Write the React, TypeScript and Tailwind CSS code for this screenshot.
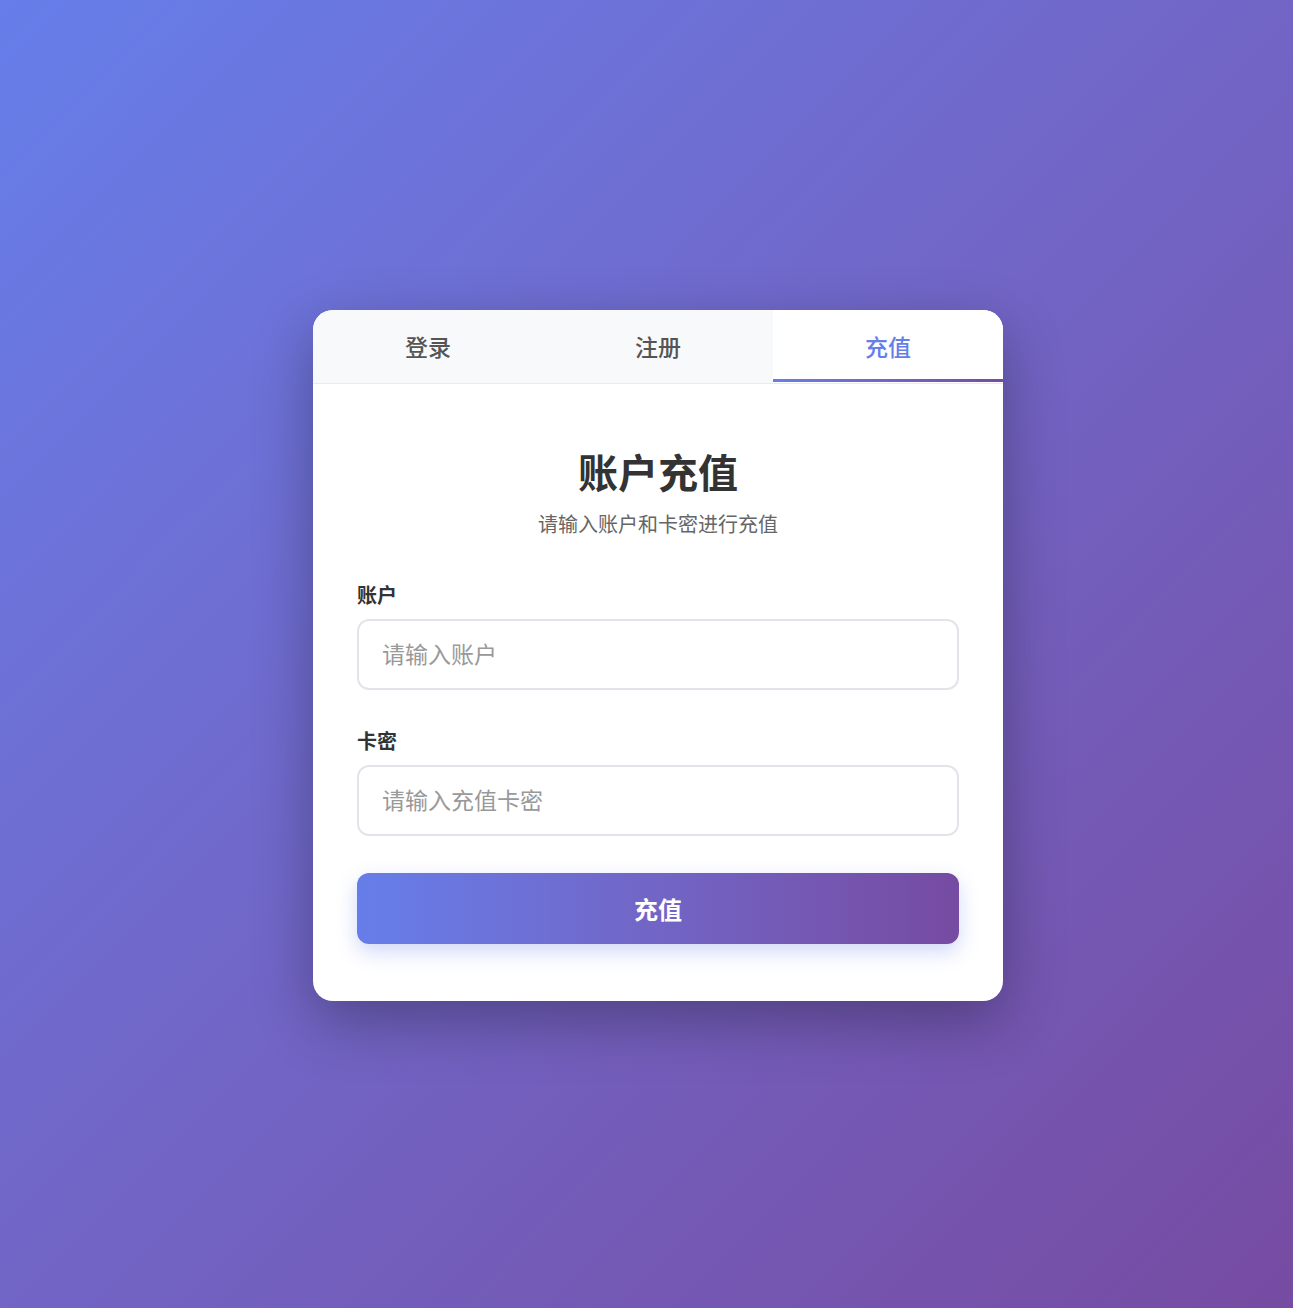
import { useState } from 'react';

type Tab = 'login' | 'register' | 'recharge';

const tabs: { key: Tab; label: string }[] = [
  { key: 'login', label: '登录' },
  { key: 'register', label: '注册' },
  { key: 'recharge', label: '充值' },
];

export default function App() {
  const [active, setActive] = useState<Tab>('recharge');
  const [account, setAccount] = useState('');
  const [card, setCard] = useState('');

  return (
    <div
      className="min-h-screen w-full flex items-center justify-center pl-[23px] pt-[3px] bg-gradient-to-br from-[#667eea] to-[#764ba2]"
      style={{ fontFamily: '"Noto Sans CJK SC", "Noto Sans", sans-serif' }}
    >
      <div className="w-[690px] bg-white rounded-[20px] overflow-hidden shadow-[0_20px_60px_rgba(0,0,0,0.3)]">
        {/* Tabs */}
        <div className="flex bg-[#f8f9fa] border-b border-[#e9ecef]">
          {tabs.map((t) => {
            const isActive = t.key === active;
            return (
              <button
                key={t.key}
                onClick={() => setActive(t.key)}
                className={`relative flex-1 h-[73px] text-[23px] font-medium ${
                  isActive ? 'bg-white text-[#667eea]' : 'text-[#555]'
                }`}
              >
                {t.label}
                {isActive && (
                  <span className="absolute left-0 right-0 bottom-[1px] h-[3px] bg-gradient-to-r from-[#667eea] to-[#764ba2]" />
                )}
              </button>
            );
          })}
        </div>

        {/* Recharge form */}
        <div className="px-[44px] pt-[66px] pb-[57px]">
          <div className="text-center">
            <h1 className="text-[40px] leading-[43px] font-bold text-[#333]">账户充值</h1>
            <p className="mt-[17px] text-[20px] leading-[27px] text-[#666]">请输入账户和卡密进行充值</p>
          </div>

          <div className="mt-[44px]">
            <label className="block text-[20px] leading-[27px] font-bold text-[#333]">账户</label>
            <input
              type="text"
              value={account}
              onChange={(e) => setAccount(e.target.value)}
              placeholder="请输入账户"
              className="mt-[11px] w-full h-[71px] px-[23px] pb-[3px] border-2 border-[#e1e5e9] rounded-[12px] text-[23px] text-[#333] placeholder:text-[#999] outline-none focus:border-[#667eea]"
            />
          </div>

          <div className="mt-[37px]">
            <label className="block text-[20px] leading-[27px] font-bold text-[#333]">卡密</label>
            <input
              type="text"
              value={card}
              onChange={(e) => setCard(e.target.value)}
              placeholder="请输入充值卡密"
              className="mt-[11px] w-full h-[71px] px-[23px] pb-[3px] border-2 border-[#e1e5e9] rounded-[12px] text-[23px] text-[#333] placeholder:text-[#999] outline-none focus:border-[#667eea]"
            />
          </div>

          <button className="mt-[37px] w-full h-[71px] rounded-[12px] bg-gradient-to-r from-[#667eea] to-[#764ba2] text-white text-[24px] font-bold shadow-[0_8px_20px_rgba(102,126,234,0.3)]">
            充值
          </button>
        </div>
      </div>
    </div>
  );
}
